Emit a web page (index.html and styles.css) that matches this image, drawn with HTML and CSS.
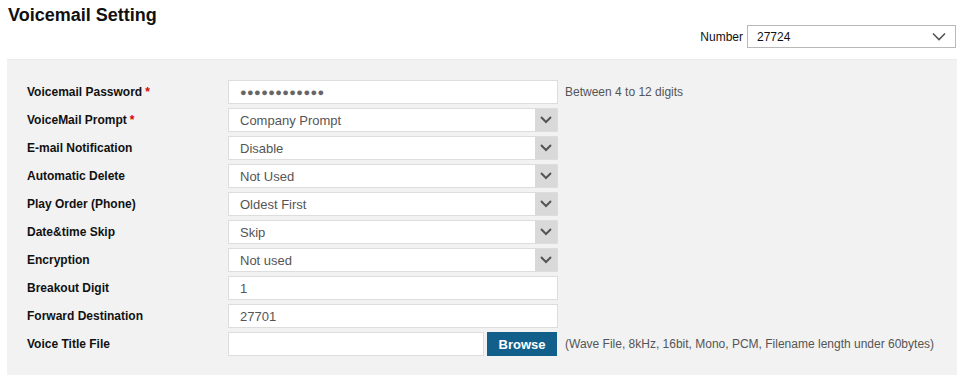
FILE: index.html
```html
<!DOCTYPE html>
<html>
<head>
<meta charset="utf-8">
<link rel="stylesheet" href="styles.css">
</head>
<body>
<h1 class="title">Voicemail Setting</h1>
<div class="number-row">
  <span class="number-label">Number</span>
  <div class="number-select">
    <span>27724</span>
    <svg class="thin-chev" width="14" height="9" viewBox="0 0 14 9"><path d="M1 1.5 L7 7.5 L13 1.5" fill="none" stroke="#555" stroke-width="1.6"/></svg>
  </div>
</div>
<div class="panel">
  <div class="form">
    <div class="label">Voicemail Password <span class="req">*</span></div>
    <div class="field"><div class="input pw">●●●●●●●●●●●●</div><span class="hint">Between 4 to 12 digits</span></div>

    <div class="label">VoiceMail Prompt <span class="req">*</span></div>
    <div class="field"><div class="input select"><span>Company Prompt</span><span class="arrow"><svg width="12" height="8" viewBox="0 0 12 8"><path d="M1 1 L6 6 L11 1" fill="none" stroke="#555" stroke-width="2"/></svg></span></div></div>

    <div class="label">E-mail Notification</div>
    <div class="field"><div class="input select"><span>Disable</span><span class="arrow"><svg width="12" height="8" viewBox="0 0 12 8"><path d="M1 1 L6 6 L11 1" fill="none" stroke="#555" stroke-width="2"/></svg></span></div></div>

    <div class="label">Automatic Delete</div>
    <div class="field"><div class="input select"><span>Not Used</span><span class="arrow"><svg width="12" height="8" viewBox="0 0 12 8"><path d="M1 1 L6 6 L11 1" fill="none" stroke="#555" stroke-width="2"/></svg></span></div></div>

    <div class="label">Play Order (Phone)</div>
    <div class="field"><div class="input select"><span>Oldest First</span><span class="arrow"><svg width="12" height="8" viewBox="0 0 12 8"><path d="M1 1 L6 6 L11 1" fill="none" stroke="#555" stroke-width="2"/></svg></span></div></div>

    <div class="label">Date&amp;time Skip</div>
    <div class="field"><div class="input select"><span>Skip</span><span class="arrow"><svg width="12" height="8" viewBox="0 0 12 8"><path d="M1 1 L6 6 L11 1" fill="none" stroke="#555" stroke-width="2"/></svg></span></div></div>

    <div class="label">Encryption</div>
    <div class="field"><div class="input select"><span>Not used</span><span class="arrow"><svg width="12" height="8" viewBox="0 0 12 8"><path d="M1 1 L6 6 L11 1" fill="none" stroke="#555" stroke-width="2"/></svg></span></div></div>

    <div class="label">Breakout Digit</div>
    <div class="field"><div class="input">1</div></div>

    <div class="label">Forward Destination</div>
    <div class="field"><div class="input">27701</div></div>

    <div class="label">Voice Title File</div>
    <div class="field"><div class="input file"></div><button class="browse">Browse</button><span class="hint">(Wave File, 8kHz, 16bit, Mono, PCM, Filename length under 60bytes)</span></div>
  </div>
</div>
</body>
</html>
```
FILE: styles.css
```css
html, body {
  margin: 0;
  padding: 0;
  background: #fff;
  font-family: "Liberation Sans", Arial, sans-serif;
  color: #111;
}
.title {
  margin: 0;
  padding: 4px 0 0 8px;
  font-size: 18px;
  font-weight: bold;
  line-height: 22px;
  color: #111;
}
.number-row {
  display: flex;
  justify-content: flex-end;
  align-items: center;
  gap: 4px;
  margin-top: -1px;
  padding-right: 1px;
}
.number-label {
  font-size: 12px;
  color: #111;
}
.number-select {
  width: 198px;
  height: 21px;
  border: 1px solid #b8b8b8;
  background: #fff;
  display: flex;
  align-items: center;
  justify-content: space-between;
  padding: 0 0 0 9px;
  box-sizing: content-box;
  font-size: 12px;
  color: #111;
}
.number-select .thin-chev {
  margin-right: 9px;
}
.panel {
  margin: 11px 0 0 7px;
  background: #f2f2f2;
  border-top: 1px solid #ebebeb;
  padding: 20px 0 30px 20px;
}
.form {
  display: grid;
  grid-template-columns: 201px 1fr;
  row-gap: 4px;
}
.label {
  height: 24px;
  display: flex;
  align-items: center;
  font-size: 12px;
  font-weight: bold;
  color: #111;
  white-space: nowrap;
}
.req {
  color: #d00;
  margin-left: 3px;
}
.field {
  display: flex;
  align-items: center;
  height: 24px;
}
.input {
  box-sizing: border-box;
  width: 330px;
  height: 24px;
  border: 1px solid #ddd;
  background: #fff;
  display: flex;
  align-items: center;
  padding-left: 11px;
  font-size: 13px;
  color: #555;
}
.input.pw {
  font-size: 11px;
  letter-spacing: 0.4px;
  color: #666;
}
.input.select {
  justify-content: space-between;
  padding-right: 0;
}
.arrow {
  width: 22px;
  height: 22px;
  background: #d9d9d9;
  display: flex;
  align-items: center;
  justify-content: center;
}
.hint {
  margin-left: 7px;
  font-size: 12px;
  color: #555;
  white-space: nowrap;
}
.input.file {
  width: 256px;
}
.browse {
  margin-left: 3px;
  width: 70px;
  height: 24px;
  border: none;
  background: #125f8b;
  color: #fff;
  font-family: "Liberation Sans", Arial, sans-serif;
  font-size: 13px;
  font-weight: bold;
  padding: 0;
}
.field .browse + .hint {
  margin-left: 8px;
}
```
